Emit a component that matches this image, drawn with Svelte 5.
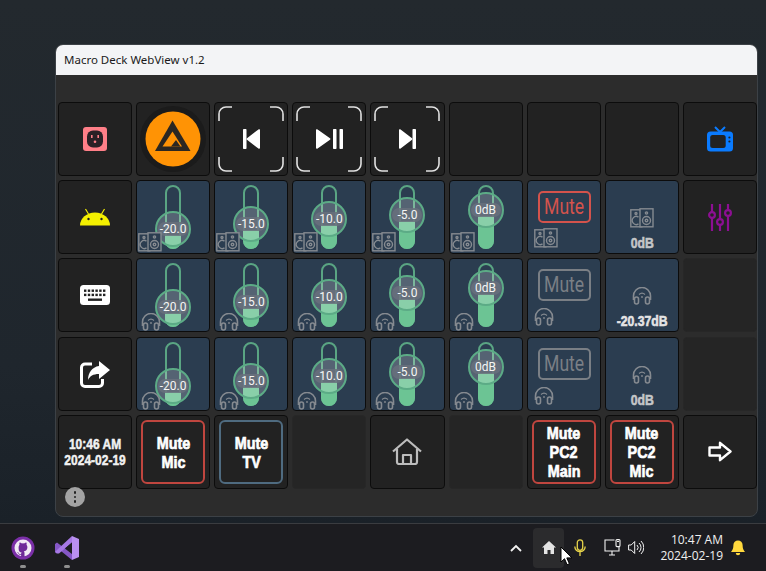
<script>
  // slider offset = where the thumb centre sits on the track, in px
  const sliders = [
    { label: '-20.0', at: 42 },
    { label: '-15.0', at: 37 },
    { label: '-10.0', at: 32 },
    { label: '-5.0', at: 28 },
    { label: '0dB', at: 23 }
  ];

  const rows = [
    ['plug', 'aimp', 'prev', 'play', 'next', 'plain', 'plain', 'plain', 'tv'].map((k) => ({ kind: k })),
    [
      { kind: 'android' },
      ...sliders.map((s) => ({ kind: 'slider', icon: 'speakers', ...s })),
      { kind: 'mute', icon: 'speakers', on: true },
      { kind: 'value', icon: 'speakers', text: '0dB' },
      { kind: 'mixer' }
    ],
    [
      { kind: 'keyboard' },
      ...sliders.map((s) => ({ kind: 'slider', icon: 'phones', ...s })),
      { kind: 'mute', icon: 'phones' },
      { kind: 'value', icon: 'phones', text: '-20.37dB' },
      { kind: 'empty' }
    ],
    [
      { kind: 'share' },
      ...sliders.map((s) => ({ kind: 'slider', icon: 'phones', ...s })),
      { kind: 'mute', icon: 'phones' },
      { kind: 'value', icon: 'phones', text: '0dB' },
      { kind: 'empty' }
    ],
    [
      { kind: 'clock' },
      { kind: 'label', lines: ['Mute', 'Mic'], tone: 'red' },
      { kind: 'label', lines: ['Mute', 'TV'], tone: 'slate' },
      { kind: 'empty' },
      { kind: 'home' },
      { kind: 'empty' },
      { kind: 'label', lines: ['Mute', 'PC2', 'Main'], tone: 'red' },
      { kind: 'label', lines: ['Mute', 'PC2', 'Mic'], tone: 'red' },
      { kind: 'arrow' }
    ]
  ];

  const cells = rows.flat();
  const blue = ['slider', 'mute', 'value'];
</script>

{#snippet speakers()}
  <svg class="sound" width="24" height="20" viewBox="0 0 24 20" fill="none" stroke="currentColor" stroke-width="1.4">
    <rect x="0.8" y="1.8" width="11" height="17" />
    <circle cx="6" cy="5.5" r="1" />
    <path d="M8.5 9.2a4 4 0 1 0 0 6.6" />
    <rect x="10" y="0.8" width="13" height="18" fill="#2b3d50" />
    <circle cx="16.5" cy="5" r="1.1" />
    <circle cx="16.5" cy="12.5" r="4" />
    <circle cx="16.5" cy="12.5" r="1.3" />
  </svg>
{/snippet}

{#snippet phones()}
  <svg class="sound" width="20" height="18" viewBox="0 0 20 18" fill="none" stroke="currentColor" stroke-width="1.6">
    <path d="M1.5 13V9a8.5 8.5 0 0 1 17 0v4" />
    <rect x="2.5" y="10" width="4" height="7" rx="2" />
    <rect x="13.5" y="10" width="4" height="7" rx="2" />
    <path d="M7 7.5a4.5 4.5 0 0 1 6 0" stroke-width="1.1" />
    <circle cx="10" cy="10" r="0.9" fill="currentColor" stroke="none" />
  </svg>
{/snippet}

{#snippet soundIcon(name)}
  {#if name === 'speakers'}{@render speakers()}{:else}{@render phones()}{/if}
{/snippet}

{#snippet brackets()}
  <svg class="brackets" width="66" height="66" viewBox="0 0 66 66" fill="none" stroke="#e2e2e2" stroke-width="1.6">
    <path d="M1 15V8a7 7 0 0 1 7-7h6" />
    <path d="M52 1h6a7 7 0 0 1 7 7v7" />
    <path d="M1 51v7a7 7 0 0 0 7 7h6" />
    <path d="M52 65h6a7 7 0 0 0 7-7v-7" />
  </svg>
{/snippet}

<div class="desktop">
  <div class="window">
    <div class="titlebar">Macro Deck WebView v1.2</div>
    <div class="content">
      <div class="grid">
        {#each cells as c}
          <div class="cell" class:blue={blue.includes(c.kind)} class:empty={c.kind === 'empty'}>
            {#if c.kind === 'slider'}
              <div class="slider">
                <div class="fill" style="top: {c.at + 6}px"></div>
                <div class="thumb" style="top: {c.at - 18}px">
                  <span class="pill">{c.label}</span>
                </div>
              </div>
              <div class="corner" class:low={c.icon === 'phones'}>{@render soundIcon(c.icon)}</div>
            {:else if c.kind === 'mute'}
              <div class="mutebox">
                <div class="mute" class:on={c.on}><span>Mute</span></div>
                <div class="muteicon" class:low={c.icon === 'phones'}>{@render soundIcon(c.icon)}</div>
              </div>
            {:else if c.kind === 'value'}
              <div class="value">
                <div class="valueicon">{@render soundIcon(c.icon)}</div>
                <div class="valuetext" class:white={c.text !== '0dB'}>{c.text}</div>
              </div>
            {:else if c.kind === 'label'}
              <div class="label {c.tone}">
                {#each c.lines as line}<div>{line}</div>{/each}
              </div>
            {:else if c.kind === 'clock'}
              <div class="clock"><div>10:46 AM</div><div>2024-02-19</div></div>
            {:else if c.kind === 'plug'}
              <svg width="24" height="24" viewBox="0 0 24 24">
                <rect width="24" height="24" rx="3" fill="#ff7f88" />
                <rect x="4" y="3.500" width="16" height="17" rx="6" fill="#2a2126" />
                <rect x="8" y="8" width="1.6" height="3" fill="#ff7f88" />
                <rect x="14.4" y="8" width="1.6" height="3" fill="#ff7f88" />
                <circle cx="12" cy="14.8" r="1.3" fill="#ff7f88" />
              </svg>
            {:else if c.kind === 'aimp'}
              <svg width="66" height="66" viewBox="0 0 66 66">
                <circle cx="33" cy="33" r="33" fill="#1b1b1b" />
                <circle cx="33" cy="33" r="27.5" fill="#ff9305" />
                <path fill="#2b2722" d="M32.500 14.500L50.500 45H15Z" />
                <path fill="#ff9305" d="M32.500 25.500L22.500 40.500H42Z" />
                <path fill="#2b2722" d="M31 40.500L36 34L40.500 40.500Z" />
              </svg>
            {:else if c.kind === 'prev'}
              {@render brackets()}
              <svg width="17" height="20" viewBox="0 0 17 20" fill="#fff">
                <rect x="0" y="0" width="3.5" height="20" rx="0.8" />
                <path d="M17 1.2V18.8a1 1 0 0 1-1.6.8L4 10.8a1 1 0 0 1 0-1.6L15.4.4A1 1 0 0 1 17 1.2z" />
              </svg>
            {:else if c.kind === 'play'}
              {@render brackets()}
              <svg width="27" height="20" viewBox="0 0 27 20" fill="#fff">
                <path d="M0 1.2V18.8a1 1 0 0 0 1.6.8L14 10.8a1 1 0 0 0 0-1.6L1.6.4A1 1 0 0 0 0 1.2z" />
                <rect x="17" y="0" width="3.5" height="20" rx="0.8" />
                <rect x="23.5" y="0" width="3.5" height="20" rx="0.8" />
              </svg>
            {:else if c.kind === 'next'}
              {@render brackets()}
              <svg width="17" height="20" viewBox="0 0 17 20" fill="#fff">
                <rect x="13.5" y="0" width="3.5" height="20" rx="0.8" />
                <path d="M0 1.2V18.8a1 1 0 0 0 1.6.8L13 10.8a1 1 0 0 0 0-1.6L1.6.4A1 1 0 0 0 0 1.2z" />
              </svg>
            {:else if c.kind === 'tv'}
              <svg width="26" height="26" viewBox="0 0 26 26">
                <path d="M8 1l5 5 5-5" fill="none" stroke="#0a7bff" stroke-width="2" />
                <rect y="5.5" width="26" height="20" rx="3.5" fill="#0a7bff" />
                <rect x="3.2" y="9" width="15.5" height="13" rx="2.5" fill="#222" />
                <circle cx="22.4" cy="11.5" r="1.1" fill="#222" />
                <circle cx="22.4" cy="15.5" r="1.1" fill="#222" />
              </svg>
            {:else if c.kind === 'android'}
              <svg width="30" height="18" viewBox="0 0 30 18">
                <path d="M5.5 1l3 5M24.5 1l-3 5" stroke="#f4f000" stroke-width="1.2" />
                <path d="M0 17.5a15 13 0 0 1 30 0z" fill="#f4f000" />
                <circle cx="8.5" cy="11" r="1.2" fill="#222" />
                <circle cx="21.5" cy="11" r="1.2" fill="#222" />
              </svg>
            {:else if c.kind === 'mixer'}
              <svg width="24" height="27" viewBox="0 0 24 27" fill="none" stroke="#8c0f92" stroke-width="2.2">
                <path d="M4 0v8.5M4 14v13M12 0v15M12 21v6M20 0v6M20 12v15" />
                <circle cx="4" cy="11" r="2.9" />
                <circle cx="12" cy="18" r="2.9" />
                <circle cx="20" cy="9" r="2.9" />
              </svg>
            {:else if c.kind === 'keyboard'}
              <svg width="30" height="20" viewBox="0 0 30 20">
                <rect width="30" height="20" rx="3.5" fill="#fff" />
                <g fill="#222">
                  {#each [0, 1, 2, 3, 4, 5] as i}
                    <rect x={4 + i * 3.8} y="4.5" width="2.4" height="2.4" />
                    <rect x={4 + i * 3.8} y="8.7" width="2.4" height="2.4" />
                  {/each}
                  <rect x="8" y="13.5" width="14" height="2.4" />
                </g>
              </svg>
            {:else if c.kind === 'share'}
              <svg width="30" height="28" viewBox="0 0 30 28">
                <path d="M12 4H5a3.5 3.5 0 0 0-3.5 3.5V23A3.5 3.5 0 0 0 5 26.5h14a3.5 3.5 0 0 0 3.5-3.5v-4" fill="none" stroke="#fff" stroke-width="3" />
                <path d="M19 1l11 9-11 9v-5c-6 0-9 2-11 6 0-7 4-13 11-14z" fill="#fff" />
              </svg>
            {:else if c.kind === 'home'}
              <svg width="30" height="27" viewBox="0 0 30 27" fill="none" stroke="#bdbdbd" stroke-width="2.2" stroke-linejoin="round">
                <path d="M1 13.5L15 1.5l14 12" />
                <path d="M5 11v13a2 2 0 0 0 2 2h16a2 2 0 0 0 2-2V11" />
                <path d="M11 26v-9h8v9" />
              </svg>
            {:else if c.kind === 'arrow'}
              <svg width="24" height="21" viewBox="0 0 24 21">
                <path d="M1.5 6.5h10.5V1.8L22.5 10.5 12 19.2v-4.7H1.5z" fill="none" stroke="#fff" stroke-width="2.4" stroke-linejoin="round" />
              </svg>
            {/if}
          </div>
        {/each}
      </div>
      <div class="menu"><i></i><i></i><i></i></div>
    </div>
  </div>
</div>

<div class="taskbar">
  <div class="apps">
    <div class="app">
      <svg width="24" height="24" viewBox="0 0 24 24">
        <circle cx="12" cy="12" r="11.5" fill="#7b2fa8" />
        <circle cx="12" cy="12" r="8.5" fill="#f1eaf5" />
        <path d="M7.6 11.2c0-1 .3-1.8.9-2.5-.1-.4-.3-1.300.1-2.200 0 0 .9-.2 2.300.9a7 7 0 0 1 2.200 0c1.400-1.100 2.300-.9 2.300-.9.400.9.200 1.800.1 2.200.6.7.9 1.500.9 2.500 0 2.800-1.700 3.700-3.600 4 .5.4.7 1 .7 1.900V21h-3.400v-2.300c-1.900.4-2.500-.8-2.900-1.500-.3-.4-.8-.7-1.100-.8.9-.2 1.500.5 1.900 1 .5.7 1.200.7 2.100.4 0-.6.300-1 .6-1.300-1.900-.3-3.100-1.300-3.100-4.300z" fill="#6f2a99" />
      </svg>
      <span class="dot"></span>
    </div>
    <div class="app">
      <svg width="24" height="24" viewBox="0 0 24 24">
        <path d="M0 8l2-1.500 15 11.500v6L3.500 13 2 17.500 0 16z" fill="#8557c6" />
        <path d="M17 0v6.500L4 17.500 2 17.500 0 16 3 13z" fill="#a678e4" />
        <path d="M17 0l7 3v18l-7 3z" fill="#b98ff0" />
        <path d="M17 6.500v11L10.500 12z" fill="#1c1c20" />
      </svg>
      <span class="dot"></span>
    </div>
  </div>
  <div class="tray">
    <svg class="chevron" width="12" height="8" viewBox="0 0 12 8" fill="none" stroke="#f2f2f2" stroke-width="1.8">
      <path d="M1 7l5-5 5 5" />
    </svg>
    <div class="trayhome">
      <svg width="14" height="13" viewBox="0 0 14 13" fill="#e4e4e4">
        <path d="M7 0L14 6.500h-2V13H8.500V9h-3v4H2V6.500H0z" />
      </svg>
      <svg class="cursor" width="13" height="20" viewBox="0 0 13 20">
        <path d="M1 1v15l3.500-3.300 2.600 6 2.300-1-2.600-5.800H12z" fill="#fff" stroke="#000" stroke-width="1" />
      </svg>
    </div>
    <svg class="mic" width="12" height="18" viewBox="0 0 12 18" fill="none" stroke="#e6d34a" stroke-width="1.3">
      <rect x="3.300" y="0.800" width="5.400" height="10.500" rx="2.700" />
      <path d="M0.800 7.500a5.200 5.200 0 0 0 10.400 0M6 13v4" />
    </svg>
    <svg class="net" width="17" height="17" viewBox="0 0 17 17" fill="none" stroke="#f2f2f2" stroke-width="1.100">
      <path d="M10.500 1H1v11h14V8" />
      <path d="M5 16h6M8 12v4" />
      <rect x="12" y="0.600" width="4" height="7" rx="1" />
      <path d="M13 2.500h2" />
    </svg>
    <svg class="vol" width="16" height="15" viewBox="0 0 16 15" fill="none" stroke="#f2f2f2" stroke-width="1">
      <path d="M0.600 5h2.600l3.500-3.500v12L3.200 10H0.600z" />
      <path d="M9 5a3.500 3.500 0 0 1 0 5M11 3a6 6 0 0 1 0 9M13 1a9 9 0 0 1 0 13" />
    </svg>
    <div class="time"><div>10:47 AM</div><div>2024-02-19</div></div>
    <svg class="bell" width="14" height="16" viewBox="0 0 14 16" fill="#ffd83d">
      <path d="M7 0.500a4.600 4.600 0 0 1 4.600 4.600c0 3.500.8 5 2.400 6.900H0c1.600-1.900 2.400-3.400 2.400-6.900A4.600 4.600 0 0 1 7 .500z" />
      <path d="M4.800 13h4.400a2.200 2.200 0 0 1-4.400 0z" />
    </svg>
  </div>
</div>

<style>
  :global(body) {
    margin: 0;
    background: #1c1c20;
    font-family: "Liberation Sans", Arial, sans-serif;
    overflow: hidden;
  }

  .desktop {
    height: 523px;
    box-sizing: border-box;
    padding: 44px 8px 0 55px;
    background: linear-gradient(180deg, #23292e 0%, #1f262d 70%, #1a2128 100%);
  }

  .window {
    height: 473px;
    box-sizing: border-box;
    border: 1px solid #3c4146;
    border-radius: 8px;
    overflow: hidden;
    display: flex;
    flex-direction: column;
    background: #2c2c2c;
  }

  .titlebar {
    height: 30px;
    flex: none;
    background: #f3f4f6;
    color: #1a1a1a;
    font-family: "Noto Sans", sans-serif;
    font-size: 11.5px;
    line-height: 30px;
    padding-left: 8px;
  }

  .content {
    flex: 1;
    padding: 27px 0 0 2px;
  }

  .grid {
    display: grid;
    width: 699px;
    grid-template-columns: repeat(9, 1fr);
    grid-auto-rows: 74px;
    gap: 4.2px 4px;
  }

  .cell {
    position: relative;
    box-sizing: border-box;
    display: flex;
    align-items: center;
    justify-content: center;
    background: #222;
    border: 1px solid #0c0c0c;
    border-radius: 4px;
  }

  .cell.blue {
    background: #2b3d50;
  }

  .cell.empty {
    background: #252525;
    border-color: #272727;
  }

  .brackets {
    position: absolute;
    left: 3px;
    top: 3px;
  }

  .slider {
    position: relative;
    box-sizing: border-box;
    width: 16px;
    height: 64px;
    border: 2px solid #5aa583;
    border-radius: 8px;
  }

  .fill {
    position: absolute;
    left: -2px;
    right: -2px;
    bottom: -2px;
    background: #6cc494;
    border-radius: 0 0 8px 8px;
  }

  .thumb {
    position: absolute;
    left: -12px;
    width: 36px;
    height: 36px;
    box-sizing: border-box;
    display: flex;
    align-items: center;
    justify-content: center;
    border: 2px solid #5cab86;
    border-radius: 50%;
    background: rgba(255, 255, 255, 0.2);
  }

  .pill {
    flex: none;
    width: 30px;
    height: 14px;
    border-radius: 7px;
    background: rgba(104, 112, 124, 0.85);
    color: #f6f6f6;
    font-family: Roboto, sans-serif;
    font-size: 12px;
    line-height: 14px;
    text-align: center;
  }

  .corner {
    position: absolute;
    left: 1px;
    top: 51px;
    color: #858a90;
    line-height: 0;
  }

  .corner.low {
    left: 4px;
    top: 54px;
  }

  .sound {
    display: block;
  }

  .mutebox {
    align-self: flex-start;
    width: 100%;
    padding: 10px 0 0;
  }

  .mute {
    box-sizing: border-box;
    width: 53px;
    height: 32px;
    margin-left: 10px;
    border: 2px solid #7a7f85;
    border-radius: 5px;
    color: #7a7f85;
    font-family: Roboto, sans-serif;
    font-size: 22px;
    line-height: 27px;
    text-align: center;
    display: flex;
    justify-content: center;
  }

  .mute span {
    flex: none;
    transform: scaleX(0.8);
  }

  .mute.on {
    border-color: #d4534c;
    color: #d4534c;
  }

  .muteicon {
    margin: 5px 0 0 6px;
    color: #858a90;
    line-height: 0;
  }

  .muteicon.low {
    margin: 7px 0 0 6px;
  }

  .value {
    display: flex;
    flex-direction: column;
    align-items: center;
    align-self: flex-start;
    padding-top: 27px;
  }

  .valueicon {
    height: 20px;
    display: flex;
    align-items: center;
    color: #858a90;
  }

  .valuetext {
    margin-top: 7px;
    color: #c4c6c8;
    font-size: 13px;
    font-weight: bold;
    line-height: 16px;
    transform: scale(0.94, 1.15);
    -webkit-text-stroke: 0.5px currentColor;
  }

  .valuetext.white {
    color: #e4e4e4;
  }

  .label {
    box-sizing: border-box;
    width: 64px;
    height: 64px;
    border: 2px solid #c0463f;
    border-radius: 6px;
    display: flex;
    flex-direction: column;
    justify-content: center;
    align-items: center;
    color: #fff;
    font-size: 15px;
    font-weight: bold;
    line-height: 19px;
    -webkit-text-stroke: 0.6px #fff;
  }

  .label div {
    transform: scale(0.96, 1.12);
  }

  .label.slate {
    border-color: #4f6b80;
  }

  .clock {
    color: #f2f2f2;
    font-size: 12px;
    font-weight: bold;
    line-height: 16px;
    text-align: center;
    -webkit-text-stroke: 0.4px #f2f2f2;
  }

  .clock div {
    transform: scaleY(1.15);
  }

  .menu {
    width: 20px;
    height: 20px;
    margin: -2px 0 0 7px;
    position: relative;
    border-radius: 50%;
    background: #a3a3a3;
    display: flex;
    flex-direction: column;
    align-items: center;
    justify-content: center;
    gap: 2px;
  }

  .menu i {
    width: 2.5px;
    height: 2.5px;
    border-radius: 50%;
    background: #222;
  }

  .taskbar {
    height: 48px;
    box-sizing: border-box;
    border-top: 1px solid #3a3c40;
    background: #1c1c20;
    display: flex;
    justify-content: space-between;
    align-items: center;
  }

  .apps {
    display: flex;
    gap: 20px;
    padding-left: 11px;
  }

  .app {
    position: relative;
    width: 24px;
    height: 24px;
  }

  .dot {
    position: absolute;
    left: 9px;
    top: 29px;
    width: 6px;
    height: 3px;
    border-radius: 2px;
    background: #8f8f8f;
  }

  .tray {
    display: flex;
    align-items: center;
    padding-right: 21px;
    color: #f0f0f0;
  }

  .chevron {
    margin-right: 11px;
  }

  .trayhome {
    position: relative;
    width: 31px;
    height: 40px;
    border-radius: 4px;
    background: #2b2b2d;
    display: flex;
    align-items: center;
    justify-content: center;
  }

  .cursor {
    position: absolute;
    left: 27px;
    top: 18px;
  }

  .mic {
    margin-left: 10px;
  }

  .net {
    margin-left: 18px;
  }

  .vol {
    margin-left: 7px;
  }

  .time {
    margin-left: 16px;
    font-family: "Open Sans", sans-serif;
    font-size: 12px;
    line-height: 16px;
    text-align: right;
  }

  .bell {
    margin-left: 8px;
  }
</style>
